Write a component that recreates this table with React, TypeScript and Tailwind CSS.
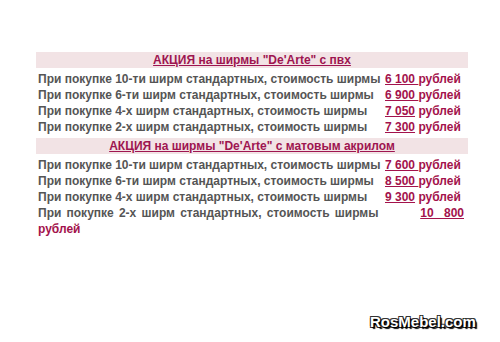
export default function App() {
  const pvc = [
    ["При покупке 10-ти ширм стандартных, стоимость ширмы", "6 100 "],
    ["При покупке 6-ти ширм стандартных, стоимость ширмы", "6 900 "],
    ["При покупке 4-х ширм стандартных, стоимость ширмы", "7 050"],
    ["При покупке 2-х ширм стандартных, стоимость ширмы", "7 300"],
  ];
  const acryl = [
    ["При покупке 10-ти ширм стандартных, стоимость ширмы", "7 600 "],
    ["При покупке 6-ти ширм стандартных, стоимость ширмы", "8 500 "],
    ["При покупке 4-х ширм стандартных, стоимость ширмы", "9 300"],
  ];

  // цена подчёркнута, иногда вместе с пробелом после неё
  const Row = ({ text, price }: { text: string; price: string }) => (
    <div className="flex h-[16px] leading-[16px] whitespace-nowrap">
      <span className="w-[349px] shrink-0 pl-[2px]">{text}</span>
      <span className="text-[#a3124c] whitespace-pre">
        <span className="underline">{price}</span>
        {price.endsWith(" ") ? "" : " "}рублей
      </span>
    </div>
  );

  return (
    <div className="w-[500px] h-[342px] bg-white relative font-['Liberation_Sans',Arial,sans-serif] font-bold text-[12px] text-[#555555]">
      <div className="pt-[52px] ml-[36px] w-[432px]">
        <div className="h-[16px] leading-[16px] bg-[#f2e3e5] text-center text-[#9e1550] underline">
          АКЦИЯ на ширмы "De'Arte" с пвх
        </div>
        <div className="pt-[3px] pb-[3px]">
          {pvc.map(([t, p]) => (
            <Row key={t} text={t} price={p} />
          ))}
        </div>
        <div className="h-[16px] leading-[16px] bg-[#f2e3e5] text-center text-[#9e1550] underline">
          АКЦИЯ на ширмы "De'Arte" с матовым акрилом
        </div>
        <div className="pt-[3px]">
          {acryl.map(([t, p]) => (
            <Row key={t} text={t} price={p} />
          ))}
          <div className="pl-[2px] pr-[4px] leading-[16px] text-justify [text-align-last:justify]">
            При покупке 2-х ширм стандартных, стоимость ширмы{" \u00a0\u00a0\u00a0\u00a0\u00a0\u00a0\u00a0"}
            <span className="text-[#a3124c] underline">{"10\u00a0 800"}</span>
          </div>
          <div className="pl-[2px] leading-[16px] text-[#a3124c]">рублей</div>
        </div>
      </div>
      <div className="absolute left-[370px] top-[311px] text-[15px] text-white font-['Liberation_Sans',Arial,sans-serif] font-bold [text-shadow:1px_1px_0_#000,2px_2px_1px_#000,-1px_-1px_0_#333,1px_-1px_0_#333,-1px_1px_0_#333]">
        RosMebel.com
      </div>
    </div>
  );
}
